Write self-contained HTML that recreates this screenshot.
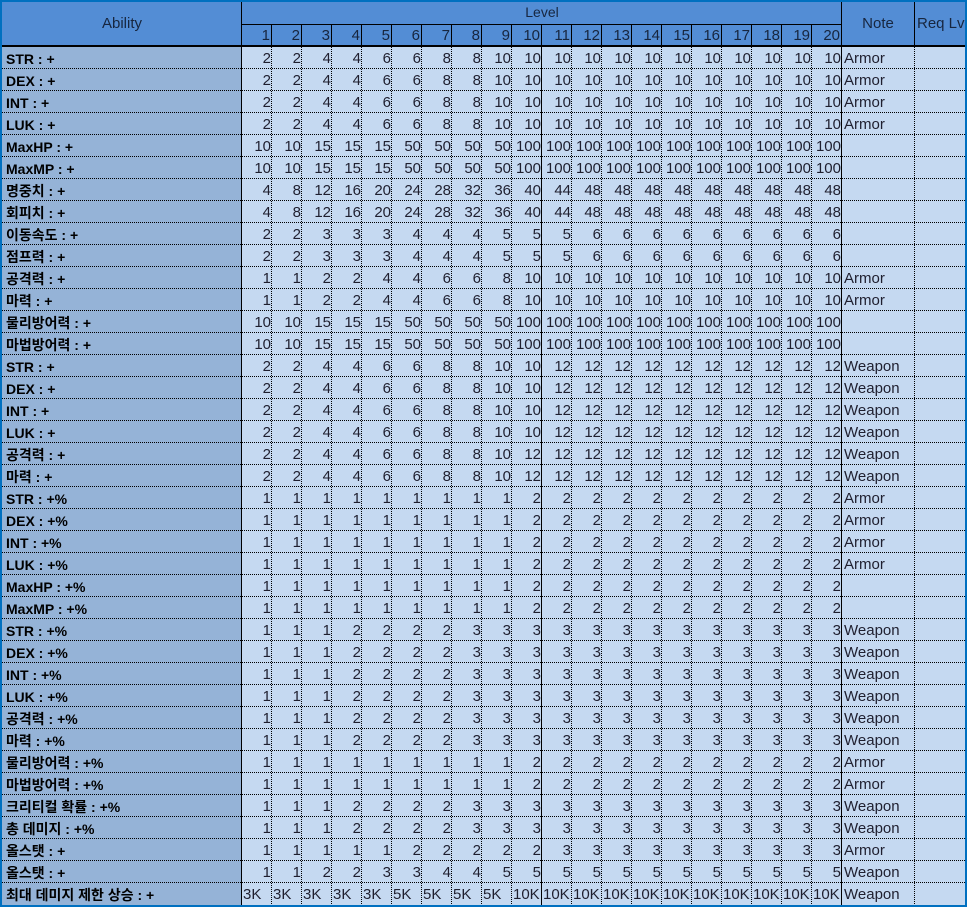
<!DOCTYPE html>
<html><head><meta charset="utf-8">
<style>
html,body{margin:0;padding:0;width:967px;height:907px;overflow:hidden;background:#0070c0;}
#w{position:relative;width:967px;height:907px;}
.c{position:absolute;box-sizing:border-box;font-family:"Liberation Sans","Noto Sans CJK KR",sans-serif;white-space:nowrap;overflow:hidden;}
.h{background:#538dd5;color:#17263f;font-size:14px;text-align:center;}
.lab{background:#95b3d7;font-weight:bold;font-size:14px;color:#000;padding-left:4px;line-height:24px;}
.d{background:#c5d9f1;font-size:15px;color:#1f1f2f;text-align:right;padding-right:1px;line-height:24px;}
.l{position:absolute;}
</style></head><body><div id="w"></div>
<script>
var W=document.getElementById('w');
function box(x,y,w,h,cls,t,st){var e=document.createElement('div');e.className=cls;e.style.cssText='left:'+x+'px;top:'+y+'px;width:'+w+'px;height:'+h+'px;'+(st||'');e.textContent=t;W.appendChild(e);return e;}
function ln(x,y,w,h,css){var e=document.createElement('div');e.className='l';e.style.cssText='left:'+x+'px;top:'+y+'px;width:'+w+'px;height:'+h+'px;'+css;W.appendChild(e);}
var A=[2,2,4,4,6,6,8,8,10,10,10,10,10,10,10,10,10,10,10,10];
var H=[10,10,15,15,15,50,50,50,50,100,100,100,100,100,100,100,100,100,100,100];
var M=[4,8,12,16,20,24,28,32,36,40,44,48,48,48,48,48,48,48,48,48];
var S=[2,2,3,3,3,4,4,4,5,5,5,6,6,6,6,6,6,6,6,6];
var P=[1,1,2,2,4,4,6,6,8,10,10,10,10,10,10,10,10,10,10,10];
var B=[2,2,4,4,6,6,8,8,10,10,12,12,12,12,12,12,12,12,12,12];
var Q=[2,2,4,4,6,6,8,8,10,12,12,12,12,12,12,12,12,12,12,12];
var R=[1,1,1,1,1,1,1,1,1,2,2,2,2,2,2,2,2,2,2,2];
var T=[1,1,1,2,2,2,2,3,3,3,3,3,3,3,3,3,3,3,3,3];
var O1=[1,1,1,1,1,2,2,2,2,2,3,3,3,3,3,3,3,3,3,3];
var O2=[1,1,2,2,3,3,4,4,5,5,5,5,5,5,5,5,5,5,5,5];
var K=['3K','3K','3K','3K','3K','5K','5K','5K','5K','10K','10K','10K','10K','10K','10K','10K','10K','10K','10K','10K'];
var rows=[['STR : +',A,'Armor'],['DEX : +',A,'Armor'],['INT : +',A,'Armor'],['LUK : +',A,'Armor'],
['MaxHP : +',H,''],['MaxMP : +',H,''],['명중치 : +',M,''],['회피치 : +',M,''],['이동속도 : +',S,''],['점프력 : +',S,''],
['공격력 : +',P,'Armor'],['마력 : +',P,'Armor'],['물리방어력 : +',H,''],['마법방어력 : +',H,''],
['STR : +',B,'Weapon'],['DEX : +',B,'Weapon'],['INT : +',B,'Weapon'],['LUK : +',B,'Weapon'],['공격력 : +',Q,'Weapon'],['마력 : +',Q,'Weapon'],
['STR : +%',R,'Armor'],['DEX : +%',R,'Armor'],['INT : +%',R,'Armor'],['LUK : +%',R,'Armor'],['MaxHP : +%',R,''],['MaxMP : +%',R,''],
['STR : +%',T,'Weapon'],['DEX : +%',T,'Weapon'],['INT : +%',T,'Weapon'],['LUK : +%',T,'Weapon'],['공격력 : +%',T,'Weapon'],['마력 : +%',T,'Weapon'],
['물리방어력 : +%',R,'Armor'],['마법방어력 : +%',R,'Armor'],['크리티컬 확률 : +%',T,'Weapon'],['총 데미지 : +%',T,'Weapon'],
['올스탯 : +',O1,'Armor'],['올스탯 : +',O2,'Weapon'],['최대 데미지 제한 상승 : +',K,'Weapon']];
box(2,2,240,43,'c h','Ability','line-height:43px;font-size:15px;');
box(242,2,600,22,'c h','Level','line-height:20px;');
for(var i=0;i<20;i++)box(242+30*i,25,30,20,'c h',''+(i+1),'text-align:right;padding-right:2px;line-height:22px;font-size:15px;');
box(842,2,72,43,'c h','Note','line-height:43px;font-size:15px;');
box(914,2,51,43,'c h','Req Lv','line-height:43px;text-align:left;padding-left:3px;font-size:15px;');
ln(242,24,600,1,'background:#000');
for(var i=1;i<20;i++)ln(241+30*i,24,1,21,'background:#000');
ln(241,2,1,43,'background:#000');ln(841,2,1,43,'background:#000');
ln(914,2,1,43,'background:#000');
ln(2,45,963,2,'background:#000');
for(var r=0;r<rows.length;r++){var y=47+22*r,row=rows[r];
 box(2,y,240,22,'c lab',row[0]);
 for(var i=0;i<20;i++){var v=''+row[1][i];var k=(r==38);
  box(242+30*i,y,30,22,'c d',v,k?'text-align:left;padding-left:1px;':'');}
 box(842,y,72,22,'c d',row[2],'text-align:left;padding-left:2px;');
 box(914,y,51,22,'c d','');
 if(r<38)ln(2,y+21,963,1,'background:repeating-linear-gradient(90deg,#000 0 1px,transparent 1px 2px)');
}
for(var i=1;i<20;i++)if(i!=10)ln(241+30*i,47,1,858,'background:repeating-linear-gradient(180deg,#000 0 1px,transparent 1px 2px)');
ln(914,47,1,858,'background:repeating-linear-gradient(180deg,#000 0 1px,transparent 1px 2px)');
ln(241,47,1,858,'background:#000');ln(541,47,1,858,'background:#000');ln(841,47,1,858,'background:#000');
</script></body></html>
